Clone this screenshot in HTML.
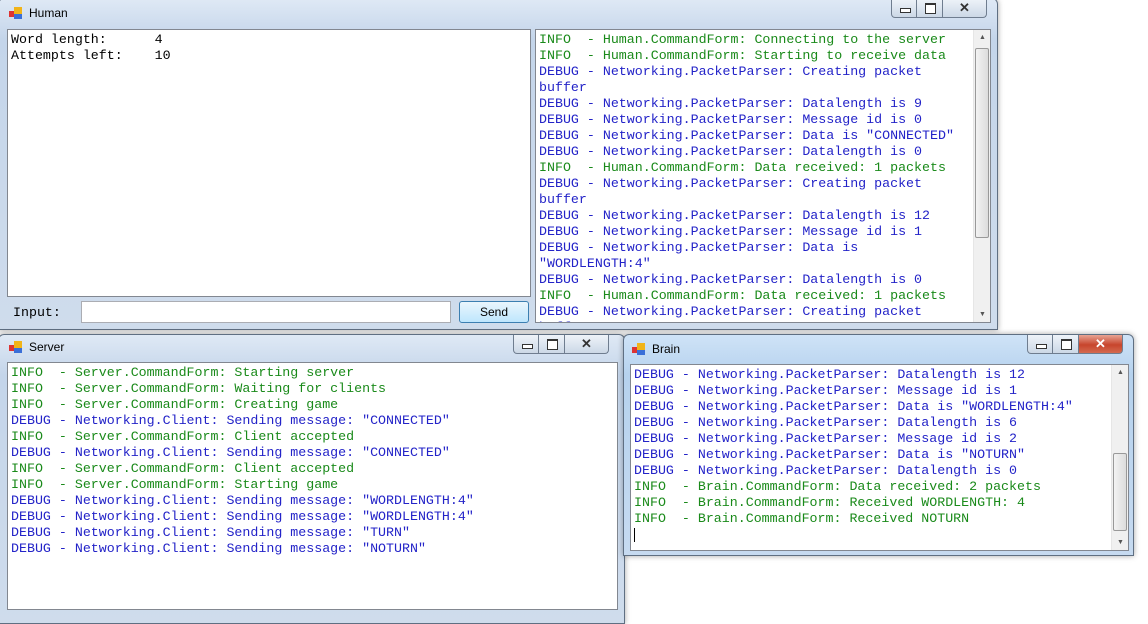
<!DOCTYPE html>
<html><head><meta charset="utf-8"><style>
*{margin:0;padding:0;box-sizing:border-box}
body{width:1148px;height:616px;background:#fff;position:relative;overflow:hidden;font-family:"Liberation Sans",sans-serif}
.win{position:absolute;background:linear-gradient(#dfe9f5,#c4d5ea 40px,#cfdcec);border:1px solid #5f6f82;border-radius:6px 6px 0 0;box-shadow:0 0 6px rgba(0,0,0,.35)}
.title{position:absolute;left:8px;top:6px;font-size:12px;color:#000;display:flex;align-items:center;gap:6px}
.ico{width:14px;height:14px;position:relative}
.ico i{position:absolute;display:block}
.btns{position:absolute;top:0;display:flex}
.btns div{height:19px;border:1px solid #6f7d8f;border-top:none;background:linear-gradient(#eef3f9,#ccd8e6);position:relative}
.btns .b1{width:26px;border-radius:0 0 0 4px}
.btns .b2{width:26px;border-left:none}
.btns .b3{width:44px;border-left:none;border-radius:0 0 4px 0}
.btns .b3.red{background:linear-gradient(#e8a494,#c7452c 55%,#d46a50)}
.min:after{content:"";position:absolute;left:8px;top:9px;width:9px;height:3px;border:1px solid #333;background:#fff}
.max:after{content:"";position:absolute;left:8px;top:4px;width:9px;height:8px;border:1px solid #333;border-top-width:2px;background:#fff}
.x{font-size:13px;text-align:center;line-height:17px;color:#333;font-weight:bold}
.red .x,.b3.red{color:#fff}
.box{position:absolute;background:#fff;border:1px solid #828790;overflow:hidden}
.log{font-family:"Liberation Mono",monospace;font-size:13.3px;line-height:16px;white-space:pre;padding:2px 0 0 3px}
.g{color:#1a8a1a}.b{color:#2323c8}.k{color:#000}
.sb{position:absolute;right:0;top:0;bottom:0;width:17px;background:#f0f0f0;border-left:1px solid #e6e6e6}
.thumb{position:absolute;left:1px;width:14px;border:1px solid #999;border-radius:2px;background:linear-gradient(90deg,#f3f3f3,#dcdcdc)}
.arr{position:absolute;left:5px;font-size:7px;color:#555}
</style></head><body>

<div class="win" style="left:-2px;top:-2px;width:1000px;height:332px">
 <div class="title" style="top:7px;left:10px"><div class="ico"><i style="left:0;top:5px;width:6px;height:6px;background:#d33"></i><i style="left:5px;top:1px;width:8px;height:7px;background:#f1b419"></i><i style="left:5px;top:8px;width:8px;height:5px;background:#3a6fd8"></i></div>Human</div>
 <div class="btns" style="left:892px"><div class="b1 min"></div><div class="b2 max"></div><div class="b3 x">✕</div></div>
 <div class="box" style="left:8px;top:30px;width:524px;height:268px">
  <div class="log k">Word length:      4
Attempts left:    10</div>
 </div>
 <div style="position:absolute;left:14px;top:306px;font-family:'Liberation Mono',monospace;font-size:13.3px">Input:</div>
 <div style="position:absolute;left:82px;top:302px;width:370px;height:22px;background:#fff;border:1px solid #abadb3"></div>
 <div style="position:absolute;left:460px;top:302px;width:70px;height:22px;border:1px solid #3c7fb1;border-radius:3px;background:linear-gradient(#eaf6fd,#bee6fd);font-size:12px;text-align:center;line-height:20px">Send</div>
 <div class="box" style="left:536px;top:30px;width:456px;height:294px">
  <div class="log"><span class="g">INFO  - Human.CommandForm: Connecting to the server
INFO  - Human.CommandForm: Starting to receive data</span>
<span class="b">DEBUG - Networking.PacketParser: Creating packet
buffer
DEBUG - Networking.PacketParser: Datalength is 9
DEBUG - Networking.PacketParser: Message id is 0
DEBUG - Networking.PacketParser: Data is "CONNECTED"
DEBUG - Networking.PacketParser: Datalength is 0</span>
<span class="g">INFO  - Human.CommandForm: Data received: 1 packets</span>
<span class="b">DEBUG - Networking.PacketParser: Creating packet
buffer
DEBUG - Networking.PacketParser: Datalength is 12
DEBUG - Networking.PacketParser: Message id is 1
DEBUG - Networking.PacketParser: Data is
"WORDLENGTH:4"
DEBUG - Networking.PacketParser: Datalength is 0</span>
<span class="g">INFO  - Human.CommandForm: Data received: 1 packets</span>
<span class="b">DEBUG - Networking.PacketParser: Creating packet
buffer</span></div>
  <div class="sb"><span class="arr" style="top:4px">▲</span><div class="thumb" style="top:18px;height:190px"></div><span class="arr" style="bottom:4px">▼</span></div>
 </div>
</div>

<div class="win" style="left:-2px;top:334px;width:627px;height:290px">
 <div class="title" style="left:10px;top:5px"><div class="ico"><i style="left:0;top:5px;width:6px;height:6px;background:#d33"></i><i style="left:5px;top:1px;width:8px;height:7px;background:#f1b419"></i><i style="left:5px;top:8px;width:8px;height:5px;background:#3a6fd8"></i></div>Server</div>
 <div class="btns" style="left:514px"><div class="b1 min"></div><div class="b2 max"></div><div class="b3 x">✕</div></div>
 <div class="box" style="left:8px;top:27px;width:611px;height:248px">
  <div class="log"><span class="g">INFO  - Server.CommandForm: Starting server
INFO  - Server.CommandForm: Waiting for clients
INFO  - Server.CommandForm: Creating game</span>
<span class="b">DEBUG - Networking.Client: Sending message: "CONNECTED"</span>
<span class="g">INFO  - Server.CommandForm: Client accepted</span>
<span class="b">DEBUG - Networking.Client: Sending message: "CONNECTED"</span>
<span class="g">INFO  - Server.CommandForm: Client accepted
INFO  - Server.CommandForm: Starting game</span>
<span class="b">DEBUG - Networking.Client: Sending message: "WORDLENGTH:4"
DEBUG - Networking.Client: Sending message: "WORDLENGTH:4"
DEBUG - Networking.Client: Sending message: "TURN"
DEBUG - Networking.Client: Sending message: "NOTURN"</span></div>
 </div>
</div>

<div class="win" style="left:623px;top:334px;width:511px;height:222px;background:linear-gradient(#cfe3f7,#b6d2ee 40px,#c6daf0)">
 <div class="title" style="left:8px;top:7px"><div class="ico"><i style="left:0;top:5px;width:6px;height:6px;background:#d33"></i><i style="left:5px;top:1px;width:8px;height:7px;background:#f1b419"></i><i style="left:5px;top:8px;width:8px;height:5px;background:#3a6fd8"></i></div>Brain</div>
 <div class="btns" style="left:403px"><div class="b1 min"></div><div class="b2 max"></div><div class="b3 red x">✕</div></div>
 <div class="box" style="left:6px;top:29px;width:499px;height:187px">
  <div class="log"><span class="b">DEBUG - Networking.PacketParser: Datalength is 12
DEBUG - Networking.PacketParser: Message id is 1
DEBUG - Networking.PacketParser: Data is "WORDLENGTH:4"
DEBUG - Networking.PacketParser: Datalength is 6
DEBUG - Networking.PacketParser: Message id is 2
DEBUG - Networking.PacketParser: Data is "NOTURN"
DEBUG - Networking.PacketParser: Datalength is 0</span>
<span class="g">INFO  - Brain.CommandForm: Data received: 2 packets
INFO  - Brain.CommandForm: Received WORDLENGTH: 4
INFO  - Brain.CommandForm: Received NOTURN</span></div>
  <div style="position:absolute;left:3px;top:163px;width:1px;height:14px;background:#000"></div>
  <div class="sb"><span class="arr" style="top:4px">▲</span><div class="thumb" style="top:88px;height:78px"></div><span class="arr" style="bottom:4px">▼</span></div>
 </div>
</div>
</body></html>
